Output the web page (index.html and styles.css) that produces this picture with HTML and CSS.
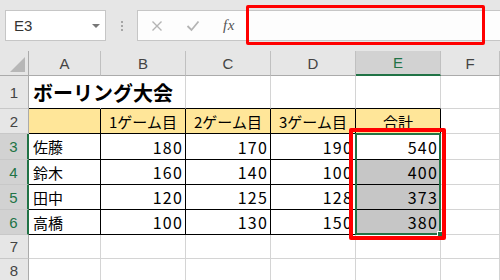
FILE: index.html
```html
<!DOCTYPE html>
<html lang="ja">
<head>
<meta charset="utf-8">
<link rel="stylesheet" href="styles.css">
</head>
<body>
<div class="app">
  <div class="toolbar">
    <div class="namebox"><span class="ref">E3</span><span class="caret"></span></div>
    <div class="grip"><i></i><i></i><i></i></div>
    <div class="fbar">
      <div class="fbtns">
        <svg class="ico" width="12" height="12" viewBox="0 0 12 12"><path d="M1.5 1.5 L10.5 10.5 M10.5 1.5 L1.5 10.5" stroke="#b4b4b4" stroke-width="1.4" fill="none"/></svg>
        <svg class="ico" width="14" height="12" viewBox="0 0 14 12"><path d="M1.5 6 L5.5 10 L12.5 1.5" stroke="#b4b4b4" stroke-width="1.8" fill="none"/></svg>
        <span class="fx">fx</span>
      </div>
      <div class="finput"></div>
    </div>
  </div>
  <div class="sheet">
    <div class="c hd corner"><span class="tri"></span></div>
    <div class="c hd col">A</div>
    <div class="c hd col">B</div>
    <div class="c hd col">C</div>
    <div class="c hd col">D</div>
    <div class="c hd col sel-col">E</div>
    <div class="c hd col">F</div>

    <div class="c hd row">1</div>
    <div class="c title tb">ボーリング大会</div>
    <div class="c tb"></div>
    <div class="c tb"></div>
    <div class="c tb"></div>
    <div class="c tb"></div>
    <div class="c"></div>

    <div class="c hd row">2</div>
    <div class="c t y"></div>
    <div class="c t y ctr">1ゲーム目</div>
    <div class="c t y ctr">2ゲーム目</div>
    <div class="c t y ctr">3ゲーム目</div>
    <div class="c t y ctr">合計</div>
    <div class="c"></div>

    <div class="c hd row sel-row">3</div>
    <div class="c t">佐藤</div>
    <div class="c t num">180</div>
    <div class="c t num">170</div>
    <div class="c t num">190</div>
    <div class="c t num">540</div>
    <div class="c"></div>

    <div class="c hd row sel-row">4</div>
    <div class="c t">鈴木</div>
    <div class="c t num">160</div>
    <div class="c t num">140</div>
    <div class="c t num">100</div>
    <div class="c t num g">400</div>
    <div class="c"></div>

    <div class="c hd row sel-row">5</div>
    <div class="c t">田中</div>
    <div class="c t num">120</div>
    <div class="c t num">125</div>
    <div class="c t num">128</div>
    <div class="c t num g">373</div>
    <div class="c"></div>

    <div class="c hd row sel-row">6</div>
    <div class="c t">高橋</div>
    <div class="c t num">100</div>
    <div class="c t num">130</div>
    <div class="c t num">150</div>
    <div class="c t num g">380</div>
    <div class="c"></div>

    <div class="c hd row">7</div>
    <div class="c"></div><div class="c"></div><div class="c"></div><div class="c"></div><div class="c"></div><div class="c"></div>

    <div class="c hd row">8</div>
    <div class="c"></div><div class="c"></div><div class="c"></div><div class="c"></div><div class="c"></div><div class="c"></div>
  </div>

  <div class="selection"></div>
  <div class="handle"></div>
  <div class="mark mark-formula"></div>
  <div class="mark mark-sum"></div>
</div>
</body>
</html>
```

FILE: styles.css
```css
* { box-sizing: border-box; }
html, body { margin: 0; padding: 0; }
body {
  width: 500px;
  height: 280px;
  overflow: hidden;
  background: #fff;
  font-family: "Noto Sans CJK JP", "Liberation Sans", sans-serif;
}
.app {
  position: relative;
  width: 500px;
  height: 280px;
  overflow: hidden;
}
.toolbar {
  height: 51px;
  background: #e6e6e6;
  display: flex;
  align-items: flex-start;
  padding: 10px 0 0 5px;
}
.namebox {
  width: 101px;
  height: 31px;
  background: #fff;
  border: 1px solid #c6c6c6;
  display: flex;
  align-items: center;
  justify-content: space-between;
  padding: 0 5px 0 8px;
}
.ref {
  font-family: "Liberation Sans", sans-serif;
  font-size: 15px;
  color: #333;
}
.caret {
  width: 0;
  height: 0;
  border-left: 4px solid transparent;
  border-right: 4px solid transparent;
  border-top: 4px solid #777;
  margin-top: 1px;
}
.grip {
  width: 31px;
  height: 31px;
  display: flex;
  flex-direction: column;
  align-items: center;
  justify-content: center;
  gap: 2px;
}
.grip i {
  display: block;
  width: 2px;
  height: 2px;
  background: #a6a6a6;
}
.fbar {
  flex: 1;
  display: flex;
  height: 31px;
}
.fbtns {
  width: 111px;
  background: #fdfdfd;
  border: 1px solid #c6c6c6;
  border-right: none;
  display: flex;
  align-items: center;
  padding-left: 13px;
}
.fbtns .ico { display: block; }
.fbtns .ico + .ico { margin-left: 23px; }
.fx {
  margin-left: 23px;
  font-family: "Liberation Serif", serif;
  font-style: italic;
  font-size: 15px;
  color: #555;
  letter-spacing: 0.5px;
}
.finput {
  flex: 1;
  background: #fdfdfd;
  border: 1px solid #c6c6c6;
  border-right: none;
}
.sheet {
  display: grid;
  grid-template-columns: 29px 72px 85px 85px 85px 85px 1fr;
  grid-template-rows: 25px 33px 25px 26px 25px 25px 25px 24px 24px;
}
.c {
  border-right: 1px solid #d4d4d4;
  border-bottom: 1px solid #d4d4d4;
  display: flex;
  align-items: center;
  font-size: 15px;
  color: #000;
  padding: 0 4px;
  white-space: nowrap;
  overflow: hidden;
}
.hd {
  background: #e6e6e6;
  color: #444;
  font-family: "Liberation Sans", sans-serif;
  font-size: 15px;
  justify-content: center;
  padding: 0;
}
.col { border-right-color: #c0c0c0; border-bottom-color: #ababab; }
.row { border-right-color: #ababab; border-bottom-color: #c8c8c8; }
.corner { border-right-color: #ababab; border-bottom-color: #ababab; position: relative; }
.tri {
  position: absolute;
  right: 3px;
  bottom: 3px;
  width: 0;
  height: 0;
  border-left: 15px solid transparent;
  border-bottom: 15px solid #b7b7b7;
}
.sel-col {
  background: #d2d2d2;
  color: #217346;
  border-bottom: 2px solid #217346;
}
.sel-row {
  background: #d2d2d2;
  color: #217346;
  border-right: 2px solid #217346;
}
.title {
  font-weight: 700;
  font-size: 20px;
  overflow: visible;
  padding-left: 4px;
}
.tb { border-bottom-color: #000; }
.title.tb { border-right-color: transparent; }
.t {
  border-right-color: #000;
  border-bottom-color: #000;
}
.y { background: #ffe699; }
.ctr { justify-content: center; }
.num {
  justify-content: flex-end;
  font-size: 16px;
  letter-spacing: 1.2px;
  padding-right: 2px;
}
.g { background: #c6c6c6; }
.selection {
  position: absolute;
  left: 355px;
  top: 133px;
  width: 86px;
  height: 102px;
  border: 2px solid #217346;
}
.handle {
  position: absolute;
  left: 437px;
  top: 231px;
  width: 7px;
  height: 7px;
  background: #217346;
  border: 1px solid #fff;
}
.mark {
  position: absolute;
  border: 3px solid #ff0000;
  border-radius: 2px;
}
.mark-formula {
  left: 246px;
  top: 5px;
  width: 239px;
  height: 40px;
}
.mark-sum {
  left: 349px;
  top: 128px;
  width: 97px;
  height: 112px;
  border-width: 4px;
}
```
